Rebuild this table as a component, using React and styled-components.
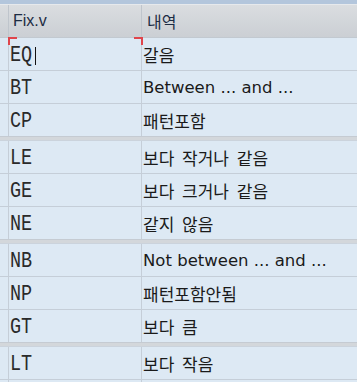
import React from "react";
import styled, { createGlobalStyle } from "styled-components";

const Global = createGlobalStyle`
  html, body { margin: 0; padding: 0; background: #dde9f4; }
  body { font-family: "Liberation Sans", "Noto Sans CJK KR", sans-serif; }
`;

const Frame = styled.div`
  width: 357px;
  height: 382px;
  overflow: hidden;
  background: #dde9f4;
  border-top: 4px solid #b3c6dc;
`;

const Grid = styled.div`
  display: grid;
  grid-template-columns: 9px 133px 1fr;
`;

const HeaderRow = styled(Grid)`
  height: 34px;
  box-sizing: border-box;
  border-top: 1px solid #e6e9ec;
  border-bottom: 1px solid #c2c9d0;
  background: linear-gradient(#dadde0, #cbcfd4);
`;

const HeaderCell = styled.div`
  display: flex;
  align-items: center;
  padding-left: ${({ $pad }) => $pad || 0}px;
  border-right: ${({ $last }) => ($last ? "none" : "1px solid #bfc5cc")};
  font-size: 16px;
  color: #1d2c44;
  font-family: "Liberation Sans", "Noto Sans CJK KR", sans-serif;
`;

const Row = styled(Grid)`
  height: ${({ $last }) => ($last ? 32 : 33)}px;
  box-sizing: border-box;
  border-bottom: ${({ $last }) => ($last ? "none" : "1px solid #c5ced8")};
`;

const Sep = styled.div`
  height: 5px;
  box-sizing: border-box;
  background: #d3d7db;
  border-top: 1px solid #c5cbd2;
  border-bottom: 1px solid #cbd3dc;
`;

const Cell = styled.div`
  position: relative;
  display: flex;
  align-items: center;
  border-right: ${({ $last }) => ($last ? "none" : "1px solid #c5ced8")};
  padding-left: ${({ $pad }) => $pad || 0}px;
  white-space: nowrap;
  color: #1a1a1a;
  font-family: "DejaVu Sans", "Noto Sans CJK KR", sans-serif;
  font-size: 16.5px;
  ${({ $focus }) =>
    $focus &&
    `
    &::before, &::after {
      content: "";
      position: absolute;
      top: -1px;
      width: 7px;
      height: 6px;
      border-top: 2px solid #e0454b;
    }
    &::before { left: -1px; border-left: 2px solid #e0454b; }
    &::after { right: -2px; border-right: 2px solid #e0454b; }
  `}
`;

const Code = styled.span`
  display: inline-block;
  margin-top: 3px;
  font-family: "Liberation Mono", monospace;
  font-size: 22px;
  line-height: 1;
  color: #2a2a2a;
  transform: scaleX(0.84);
  transform-origin: left center;
`;

const Kor = styled.span`
  font-family: "Noto Sans CJK KR", sans-serif;
  font-size: 17px;
  word-spacing: 4px;
`;

const Caret = styled.span`
  display: inline-block;
  width: 0;
  height: 18px;
  margin-top: 3px;
  border-left: 1px solid #111;
  margin-left: -1px;
`;

const groups = [
  [
    ["EQ", "갈음"],
    ["BT", "Between ... and ..."],
    ["CP", "패턴포함"],
  ],
  [
    ["LE", "보다 작거나 같음"],
    ["GE", "보다 크거나 같음"],
    ["NE", "같지 않음"],
  ],
  [
    ["NB", "Not between ... and ..."],
    ["NP", "패턴포함안됨"],
    ["GT", "보다 큼"],
  ],
  [
    ["LT", "보다 작음"],
    ["", ""],
  ],
];

const isKorean = (s) => /[\uac00-\ud7a3]/.test(s);

export default function App() {
  return (
    <>
      <Global />
      <Frame>
        <HeaderRow>
          <HeaderCell />
          <HeaderCell $pad={4}>Fix.v</HeaderCell>
          <HeaderCell $pad={5} $last>내역</HeaderCell>
        </HeaderRow>
        {groups.map((g, gi) => (
          <React.Fragment key={gi}>
            {gi > 0 && <Sep />}
            {g.map(([code, text], ri) => (
              <Row key={ri} $last={ri === g.length - 1 && gi < groups.length - 1}>
                <Cell />
                <Cell $pad={1} $focus={code === "EQ"}>
                  <Code>{code}</Code>
                  {code === "EQ" && <Caret />}
                </Cell>
                <Cell $pad={1} $last>
                  {isKorean(text) ? <Kor>{text}</Kor> : text}
                </Cell>
              </Row>
            ))}
          </React.Fragment>
        ))}
      </Frame>
    </>
  );
}
